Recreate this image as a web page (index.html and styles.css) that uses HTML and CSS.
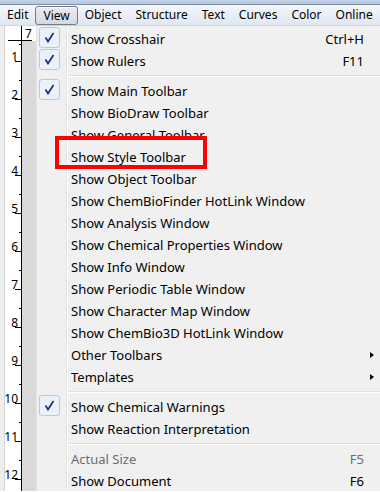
FILE: index.html
```html
<!DOCTYPE html>
<html lang="en">
<head>
  <meta charset="UTF-8" />
  <title>View Menu</title>
  <link rel="stylesheet" href="styles.css">
</head>
<body>
  <div class="window">
    <div class="titlebar"></div>
    <nav class="menubar">
      <span class="menubar-item">Edit</span>
      <span class="menubar-item open">View</span>
      <span class="menubar-item">Object</span>
      <span class="menubar-item">Structure</span>
      <span class="menubar-item">Text</span>
      <span class="menubar-item">Curves</span>
      <span class="menubar-item">Color</span>
      <span class="menubar-item">Online</span>
    </nav>

    <div class="workspace">
      <svg class="ruler" width="36" height="465" viewBox="0 0 36 465">
        <rect x="0" y="0" width="4" height="465" fill="#eeeeee"/>
        <rect x="4" y="0" width="1" height="465" fill="#d4d4d4"/>
        <rect x="5" y="0" width="17" height="465" fill="#ffffff"/>
        <rect x="22" y="15" width="14" height="450" fill="#d9d9d9"/>
        <rect x="22" y="0" width="13" height="15" fill="#ffffff"/>
        <line x1="21.5" y1="0" x2="21.5" y2="465" stroke="#000"/>
        <line x1="8" y1="14.5" x2="32" y2="14.5" stroke="#000"/>
        <text x="25" y="12" class="ruler-num" text-anchor="start">7</text>
        <g stroke="#000">
          <line x1="19" y1="18.5" x2="21" y2="18.5"/>
          <line x1="15" y1="35.5" x2="21" y2="35.5"/>
          <line x1="19" y1="54.5" x2="21" y2="54.5"/>
          <line x1="15" y1="73.5" x2="21" y2="73.5"/>
          <line x1="19" y1="92.5" x2="21" y2="92.5"/>
          <line x1="15" y1="111.5" x2="21" y2="111.5"/>
          <line x1="19" y1="130.5" x2="21" y2="130.5"/>
          <line x1="15" y1="149.5" x2="21" y2="149.5"/>
          <line x1="19" y1="168.5" x2="21" y2="168.5"/>
          <line x1="15" y1="187.5" x2="21" y2="187.5"/>
          <line x1="19" y1="206.5" x2="21" y2="206.5"/>
          <line x1="15" y1="225.5" x2="21" y2="225.5"/>
          <line x1="19" y1="244.5" x2="21" y2="244.5"/>
          <line x1="15" y1="263.5" x2="21" y2="263.5"/>
          <line x1="19" y1="282.5" x2="21" y2="282.5"/>
          <line x1="15" y1="301.5" x2="21" y2="301.5"/>
          <line x1="19" y1="320.5" x2="21" y2="320.5"/>
          <line x1="15" y1="339.5" x2="21" y2="339.5"/>
          <line x1="19" y1="358.5" x2="21" y2="358.5"/>
          <line x1="15" y1="377.5" x2="21" y2="377.5"/>
          <line x1="19" y1="396.5" x2="21" y2="396.5"/>
          <line x1="15" y1="415.5" x2="21" y2="415.5"/>
          <line x1="19" y1="434.5" x2="21" y2="434.5"/>
          <line x1="15" y1="453.5" x2="21" y2="453.5"/>
        </g>
        <g class="ruler-num" text-anchor="end">
          <text x="18" y="35">1</text>
          <text x="18" y="73">2</text>
          <text x="18" y="111">3</text>
          <text x="18" y="149">4</text>
          <text x="18" y="187">5</text>
          <text x="18" y="225">6</text>
          <text x="18" y="263">7</text>
          <text x="18" y="301">8</text>
          <text x="18" y="339">9</text>
          <text x="18" y="377">10</text>
          <text x="18" y="415">11</text>
          <text x="18" y="453">12</text>
        </g>
      </svg>

      <ul class="menu">
        <li class="item"><span class="check"><svg width="11" height="11" viewBox="0 0 11 11"><path d="M1.5 5.5 L4 9.5 L9.5 1" /></svg></span><span class="label">Show Crosshair</span><span class="key">Ctrl+H</span></li>
        <li class="item"><span class="check"><svg width="11" height="11" viewBox="0 0 11 11"><path d="M1.5 5.5 L4 9.5 L9.5 1" /></svg></span><span class="label">Show Rulers</span><span class="key">F11</span></li>
        <li class="sep"></li>
        <li class="item"><span class="check"><svg width="11" height="11" viewBox="0 0 11 11"><path d="M1.5 5.5 L4 9.5 L9.5 1" /></svg></span><span class="label">Show Main Toolbar</span></li>
        <li class="item"><span class="label">Show BioDraw Toolbar</span></li>
        <li class="item"><span class="label">Show General Toolbar</span></li>
        <li class="item"><span class="label">Show Style Toolbar</span></li>
        <li class="item"><span class="label">Show Object Toolbar</span></li>
        <li class="item"><span class="label">Show ChemBioFinder HotLink Window</span></li>
        <li class="item"><span class="label">Show Analysis Window</span></li>
        <li class="item"><span class="label">Show Chemical Properties Window</span></li>
        <li class="item"><span class="label">Show Info Window</span></li>
        <li class="item"><span class="label">Show Periodic Table Window</span></li>
        <li class="item"><span class="label">Show Character Map Window</span></li>
        <li class="item"><span class="label">Show ChemBio3D HotLink Window</span></li>
        <li class="item submenu"><span class="label">Other Toolbars</span></li>
        <li class="item submenu"><span class="label">Templates</span></li>
        <li class="sep"></li>
        <li class="item"><span class="check"><svg width="11" height="11" viewBox="0 0 11 11"><path d="M1.5 5.5 L4 9.5 L9.5 1" /></svg></span><span class="label">Show Chemical Warnings</span></li>
        <li class="item"><span class="label">Show Reaction Interpretation</span></li>
        <li class="sep"></li>
        <li class="item disabled"><span class="label">Actual Size</span><span class="key">F5</span></li>
        <li class="item"><span class="label">Show Document</span><span class="key">F6</span></li>
      </ul>
    </div>

    <div class="highlight"></div>
  </div>
</body>
</html>
```

FILE: styles.css
```css
* {
  box-sizing: border-box;
  margin: 0;
  padding: 0;
}

body {
  width: 380px;
  height: 492px;
  overflow: hidden;
  background: #ffffff;
  font-family: 'Noto Sans', 'Open Sans', sans-serif;
  font-size: 13px;
  color: #000;
}

.window {
  position: relative;
  height: 492px;
  overflow: hidden;
}

.titlebar {
  height: 5px;
  background: linear-gradient(#c3d2e6, #b7c8de);
  border-bottom: 1px solid #7d8da3;
}

.menubar {
  display: flex;
  height: 21px;
  align-items: stretch;
  background: linear-gradient(#f4f7fb, #dfe7f2);
  border-bottom: 1px solid #c9d3e1;
  white-space: nowrap;
  font-size: 12px;
}

.menubar-item {
  display: flex;
  align-items: center;
  padding: 0 7px;
  line-height: 1;
}

.menubar-item.open {
  margin: 1px 0 0 0;
  padding: 0 7px;
  border: 1px solid #737b86;
  border-radius: 3px;
  background: linear-gradient(#e9ecf1, #d4d9e1);
  box-shadow: inset 0 1px 0 rgba(255, 255, 255, 0.7);
}

.workspace {
  display: flex;
  height: 465px;
}

.ruler {
  flex: none;
  display: block;
}

.ruler-num {
  font-family: 'Noto Sans', sans-serif;
  font-size: 12px;
  fill: #000;
}

.menu {
  list-style: none;
  flex: 1;
  padding-top: 2px;
  border-left: 1px solid #e4e4e4;
  background:
    linear-gradient(90deg, transparent 29px, #e2e3e3 29px, #e2e3e3 30px, #ffffff 30px, #ffffff 31px, transparent 31px),
    #f0f0f0;
}

.item {
  display: flex;
  align-items: center;
  height: 22px;
  padding-left: 34px;
  padding-right: 16px;
  position: relative;
  white-space: nowrap;
}

.check {
  position: absolute;
  left: 2px;
  top: -1px;
  width: 21px;
  height: 21px;
  display: flex;
  align-items: center;
  justify-content: center;
  border: 1px solid #a9cbee;
  border-radius: 3px;
  background: #eaf1f9;
}

.check svg path {
  fill: none;
  stroke: #1b2a86;
  stroke-width: 1.7;
  stroke-linejoin: miter;
}

.label {
  flex: 1;
}

.key {
  text-align: right;
}

.submenu::after {
  content: '';
  position: absolute;
  right: 6px;
  top: 8px;
  border-left: 4px solid #000;
  border-top: 3.5px solid transparent;
  border-bottom: 3.5px solid transparent;
}

.disabled {
  color: #6d6d6d;
}

.sep {
  height: 8px;
  margin-left: 31px;
  background: linear-gradient(transparent 3px, #e0e0e0 3px, #e0e0e0 4px, #ffffff 4px, #ffffff 5px, transparent 5px);
}

.highlight {
  position: absolute;
  left: 55px;
  top: 136px;
  width: 152px;
  height: 33px;
  border: 4px solid #ff0000;
}
```
